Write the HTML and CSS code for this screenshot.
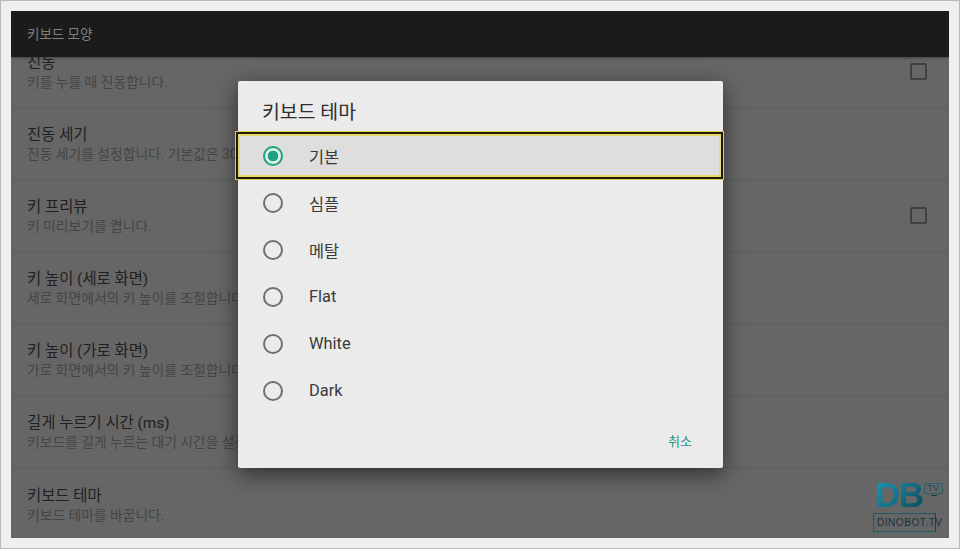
FILE: index.html
```html
<!DOCTYPE html>
<html lang="ko">
<head>
<meta charset="utf-8">
<title>키보드 모양</title>
<link rel="stylesheet" href="styles.css">
</head>
<body>
<div class="frame">
  <div class="screen">
    <header class="appbar">키보드 모양</header>
    <main class="list">
      <div class="row"><div class="row-text"><div class="row-title">진동</div><div class="row-sub">키를 누를 때 진동합니다.</div></div><span class="check"></span></div>
      <div class="row"><div class="row-text"><div class="row-title">진동 세기</div><div class="row-sub">진동 세기를 설정합니다. 기본값은 30</div></div></div>
      <div class="row"><div class="row-text"><div class="row-title">키 프리뷰</div><div class="row-sub">키 미리보기를 켭니다.</div></div><span class="check"></span></div>
      <div class="row"><div class="row-text"><div class="row-title">키 높이 (세로 화면)</div><div class="row-sub">세로 화면에서의 키 높이를 조절합니다</div></div></div>
      <div class="row"><div class="row-text"><div class="row-title">키 높이 (가로 화면)</div><div class="row-sub">가로 화면에서의 키 높이를 조절합니다</div></div></div>
      <div class="row"><div class="row-text"><div class="row-title">길게 누르기 시간 (ms)</div><div class="row-sub">키보드를 길게 누르는 대기 시간을 설정합니다</div></div></div>
      <div class="row"><div class="row-text"><div class="row-title">키보드 테마</div><div class="row-sub">키보드 테마를 바꿉니다.</div></div></div>
    </main>
  </div>
  <section class="dialog">
    <h2 class="dialog-title">키보드 테마</h2>
    <div class="options">
      <div class="option selected"><span class="radio on"></span><span>기본</span></div>
      <div class="option"><span class="radio"></span><span>심플</span></div>
      <div class="option"><span class="radio"></span><span>메탈</span></div>
      <div class="option"><span class="radio"></span><span>Flat</span></div>
      <div class="option"><span class="radio"></span><span>White</span></div>
      <div class="option"><span class="radio"></span><span>Dark</span></div>
    </div>
    <div class="dialog-actions"><span class="cancel">취소</span></div>
  </section>
  <div class="logo">
    <div class="logo-top"><span class="logo-db">DB</span><span class="logo-tv">TV</span></div>
    <div class="logo-name">DINOBOT.TV</div>
  </div>
</div>
</body>
</html>
```
FILE: styles.css
```css
* { box-sizing: border-box; }
html, body { margin: 0; padding: 0; }
body {
  width: 960px;
  height: 549px;
  overflow: hidden;
  font-family: Roboto, "Noto Sans CJK KR", sans-serif;
}
.frame {
  position: relative;
  width: 960px;
  height: 549px;
  padding: 10px;
  background: #efefef;
  border: 1px solid #b9b9b9;
}
.screen {
  display: flex;
  flex-direction: column;
  height: 100%;
  background: #666;
  overflow: hidden;
}
.appbar {
  flex: none;
  position: relative;
  z-index: 1;
  height: 46px;
  padding: 14px 0 0 16px;
  background: #1b1b1b;
  color: #808080;
  font-size: 13.5px;
  line-height: 18px;
  box-shadow: 0 1px 3px rgba(0, 0, 0, .35);
}
.list { flex: none; margin-top: -21px; }
.row {
  display: flex;
  align-items: center;
  justify-content: space-between;
  height: 72px;
  padding: 0 22px 0 16px;
  border-bottom: 1px solid #5e5e5e;
}
.row:last-child { border-bottom: 0; }
.row-text { padding-top: 1px; }
.row-title { color: #1f1f1f; font-size: 15.4px; line-height: 20px; }
.row-sub { color: #454545; font-size: 13.8px; line-height: 18px; white-space: nowrap; }
.check {
  width: 17px;
  height: 17px;
  border: 2px solid #404040;
  border-radius: 2px;
}
.dialog {
  position: absolute;
  left: 237px;
  top: 80px;
  width: 485px;
  height: 387px;
  background: #ebebeb;
  border-radius: 2px;
  box-shadow: 0 6px 22px rgba(0, 0, 0, .55);
}
.dialog-title {
  margin: 0;
  padding: 20px 24px 0;
  height: 51px;
  color: #2e2e2e;
  font-size: 19.4px;
  font-weight: 400;
  line-height: 24px;
}
.options { display: flex; flex-direction: column; }
.option {
  display: flex;
  align-items: center;
  gap: 26px;
  height: 47px;
  padding-left: 25px;
  color: #3a3a3a;
  font-size: 16.4px;
}
.option.selected {
  margin: 0 0 0 -2px;
  padding-left: 25px;
  background: #dedede;
  border: 2px solid #1f1a05;
  box-shadow: 0 0 0 1px #e0cc50, inset 0 0 0 2px #e9d96a;
}
.radio {
  flex: none;
  width: 20px;
  height: 20px;
  border: 2px solid #6f6f6f;
  border-radius: 50%;
}
.radio.on {
  border-color: #1fa07f;
  background: radial-gradient(circle, #1fa07f 0 5px, #dcefe9 5.6px);
}
.dialog-actions {
  display: flex;
  justify-content: flex-end;
  padding: 19px 31px 0 0;
}
.cancel { color: #1d9a7c; font-size: 13px; line-height: 18px; }
.logo {
  position: absolute;
  left: 872px;
  top: 477px;
  width: 74px;
  font-family: "Liberation Sans", sans-serif;
}
.logo-top { display: flex; align-items: flex-start; padding-left: 2px; height: 33px; }
.logo-db {
  font-size: 35px;
  font-weight: 700;
  line-height: 33px;
  letter-spacing: -1.5px;
  background: linear-gradient(135deg, #1d9ab8, #0a4a5c);
  -webkit-background-clip: text;
  background-clip: text;
  color: transparent;
}
.logo-tv {
  position: relative;
  margin: 5px 0 0 1px;
  padding: 0 3px;
  height: 11px;
  border: 1px solid #2f5f6a;
  border-radius: 1px;
  color: #28444c;
  font-size: 9px;
  line-height: 9px;
}
.logo-tv::after {
  content: "";
  position: absolute;
  left: 6px;
  top: 11px;
  width: 6px;
  height: 1px;
  background: #1c2f34;
}
.logo-name {
  margin-top: 2px;
  width: 63px;
  height: 19px;
  padding-left: 3px;
  border: 1px solid #1f5a6a;
  border-right-color: #2a3a3e;
  color: #17323a;
  font-size: 10px;
  line-height: 17px;
  letter-spacing: .55px;
  white-space: nowrap;
}
```
